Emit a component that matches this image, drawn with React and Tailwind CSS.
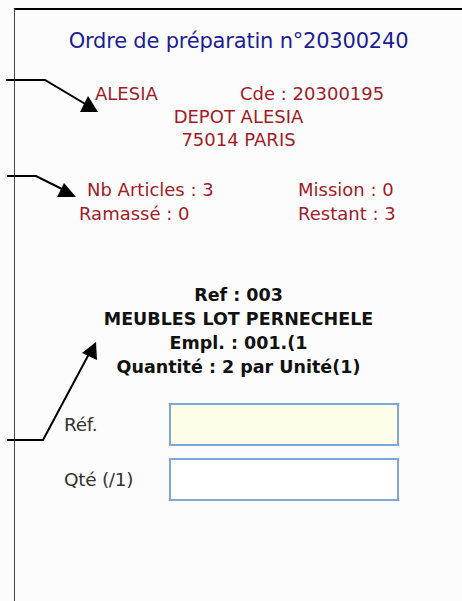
export default function App() {
  return (
    <div className="relative w-[462px] h-[601px] overflow-hidden bg-[#fcfcfc] font-['DejaVu_Sans',sans-serif]">
      {/* Screen frame */}
      <div className="ml-[14px] mt-[8px] h-[593px] border-l-[1.5px] border-t-2 border-l-[#444] border-t-black">
        <div className="pt-[18px] text-center text-[21px] leading-[26px] tracking-[-0.2px] text-[#1c1c96]">
          Ordre de préparatin n°20300240
        </div>

        {/* Client */}
        <div className="mt-[28px] text-[18px] leading-[23px] text-[#a01c28]">
          <div className="flex pl-[80px]">
            <span className="w-[145px]">ALESIA</span>
            <span>Cde : 20300195</span>
          </div>
          <div className="text-center">DEPOT ALESIA</div>
          <div className="text-center">75014 PARIS</div>
        </div>

        {/* Stats */}
        <div className="mt-[27px] text-[18px] leading-[24px] text-[#a01c28]">
          <div className="flex">
            <span className="w-[283px] pl-[72px]">Nb Articles : 3</span>
            <span>Mission : 0</span>
          </div>
          <div className="flex">
            <span className="w-[283px] pl-[64px]">Ramassé : 0</span>
            <span>Restant : 3</span>
          </div>
        </div>

        {/* Article */}
        <div className="mt-[57px] text-center text-[17.5px] font-bold leading-[24px] text-[#111]">
          <div>Ref : 003</div>
          <div>MEUBLES LOT PERNECHELE</div>
          <div>Empl. : 001.(1</div>
          <div>Quantité : 2 par Unité(1)</div>
        </div>

        {/* Form */}
        <div className="mt-[24px] flex flex-col gap-[12px] text-[18.5px] tracking-[-0.3px] text-[#333]">
          <div className="flex items-center">
            <label className="w-[154px] pl-[49px]">Réf.</label>
            <div className="h-[43px] w-[230px] border-2 border-[#7ea6d8] bg-[#fefde8]" />
          </div>
          <div className="flex items-center">
            <label className="w-[154px] pl-[49px]">Qté (/1)</label>
            <div className="h-[43px] w-[230px] border-2 border-[#7ea6d8] bg-white" />
          </div>
        </div>
      </div>

      {/* Annotation arrows */}
      <svg className="pointer-events-none absolute inset-0" width="462" height="601">
        <g fill="none" stroke="#000" strokeWidth="2">
          <polyline points="6,80 45,80 92,108" />
          <polyline points="7,176 36,176 68,192" />
          <polyline points="7,440 43,440 90,352" />
        </g>
        <path d="M80 112 L98 112 L88 96 Z" fill="#000" />
        <path d="M57 197 L76 197 L64 183 Z" fill="#000" />
        <path d="M82 353 L96 342 L97 360 Z" fill="#000" />
      </svg>
    </div>
  );
}
